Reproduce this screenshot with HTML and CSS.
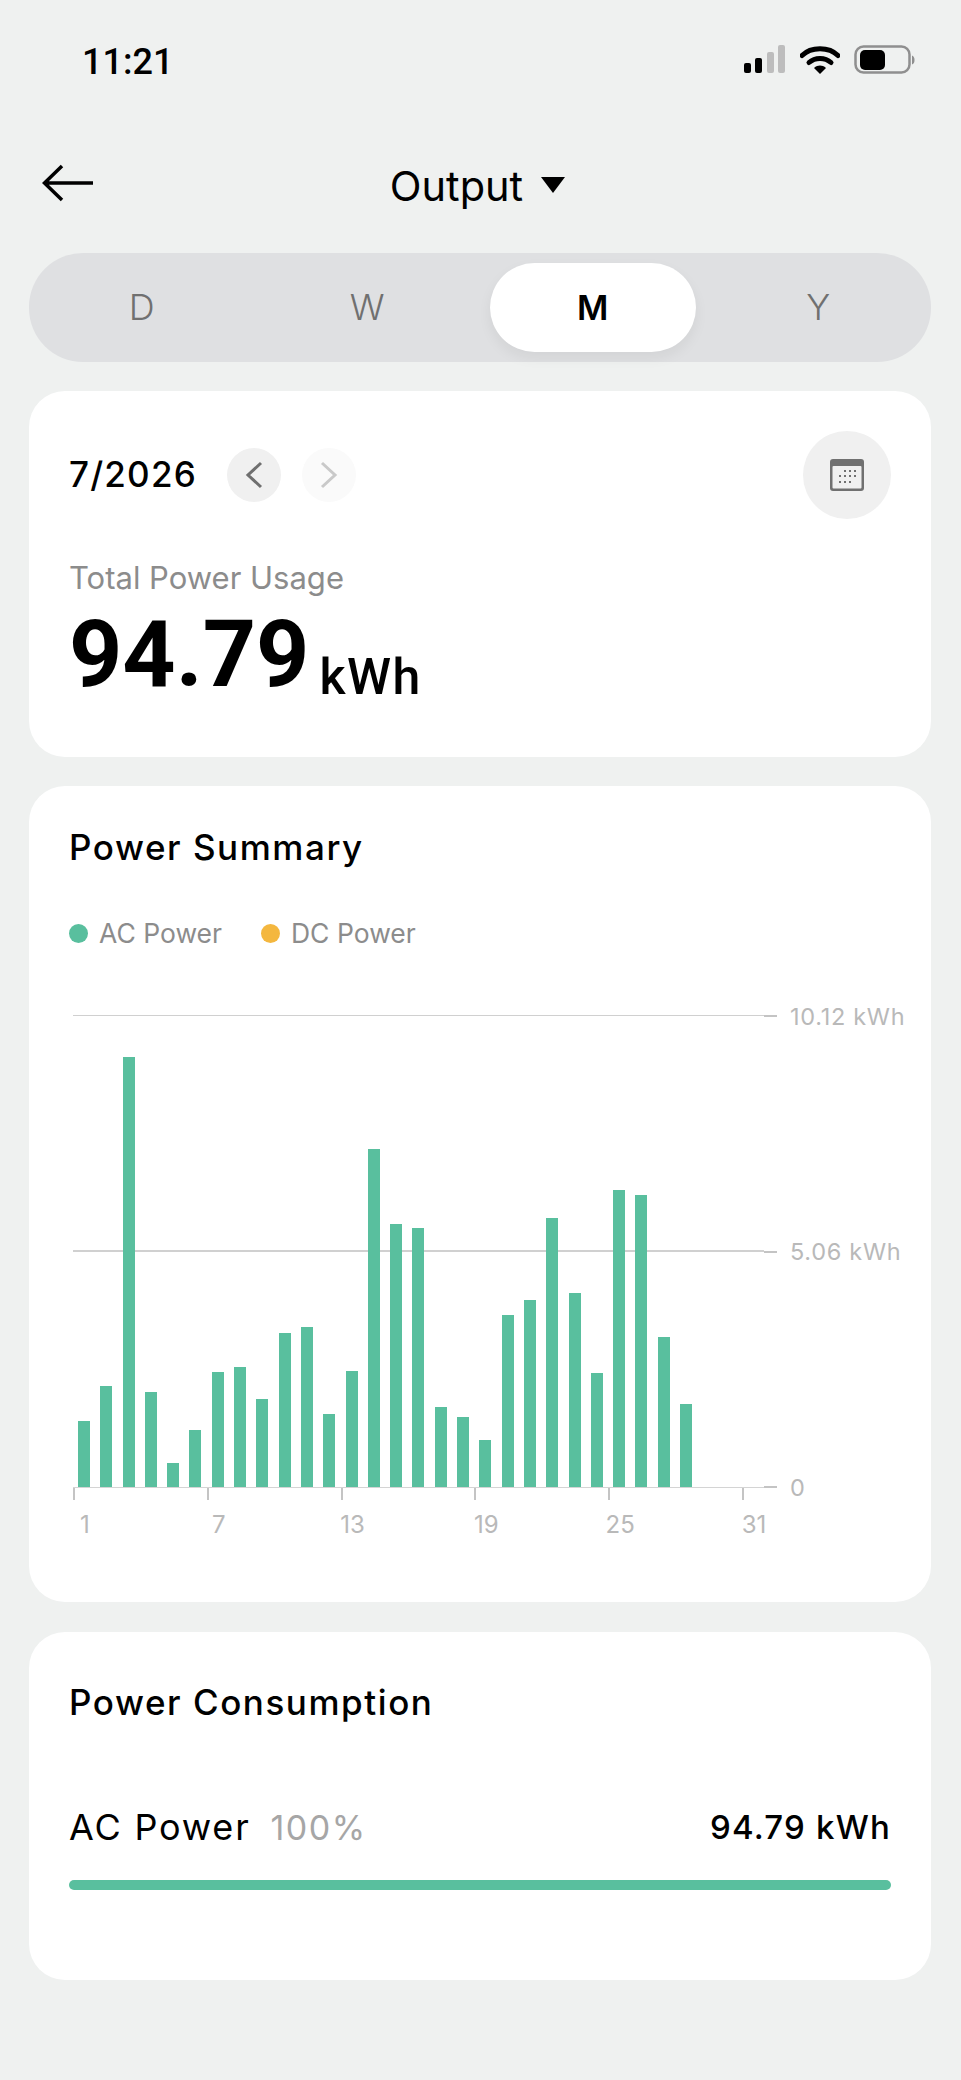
FILE: index.html
```html
<!DOCTYPE html>
<html lang="en">
<head>
    <meta charset="utf-8" />
    <title>Output</title>
    <link rel="stylesheet" href="styles.css">
</head>
<body>

    <div class="statusbar">
        <span class="time">11:21</span>
        <div class="status-icons">
            <svg width="42" height="30" viewBox="0 0 42 30">
                <rect x="0" y="18" width="7" height="10" rx="2" fill="#000"/>
                <rect x="11" y="13" width="7" height="15" rx="2" fill="#000"/>
                <rect x="23" y="7" width="7" height="21" rx="2" fill="#bdbdbd"/>
                <rect x="34" y="0" width="7" height="28" rx="2" fill="#bdbdbd"/>
            </svg>
            <svg width="40" height="30" viewBox="0 0 40 30">
                <path d="M2 10.5C11 1.5 29 1.5 38 10.5" fill="none" stroke="#000" stroke-width="5" stroke-linecap="round"/>
                <path d="M9 17.5C15 12 25 12 31 17.5" fill="none" stroke="#000" stroke-width="5" stroke-linecap="round"/>
                <path d="M14 23L20 29L26 23C22 19.8 18 19.8 14 23Z" fill="#000"/>
            </svg>
            <svg width="61" height="30" viewBox="0 0 61 30">
                <rect x="1.5" y="1.5" width="54" height="26" rx="8" fill="none" stroke="#8f8f8f" stroke-width="2.5"/>
                <rect x="6" y="5" width="25" height="20" rx="5" fill="#000"/>
                <path d="M58 10.5C60 11.5 60.5 13 60.5 15C60.5 17 60 18.500 58 19.500Z" fill="#8f8f8f"/>
            </svg>
        </div>
    </div>

    <header class="topbar">
        <svg class="back" width="52" height="38" viewBox="0 0 52 38">
            <path d="M51 19H3M20 2L2.500 19L20 36" fill="none" stroke="#000" stroke-width="3.500"/>
        </svg>
        <div class="page-title">Output <span class="caret"></span></div>
    </header>

    <div class="segments">
        <div class="seg">D</div>
        <div class="seg">W</div>
        <div class="seg seg-active">M</div>
        <div class="seg">Y</div>
    </div>

    <section class="card card-total">
        <div class="date-row">
            <span class="date">7/2026</span>
            <button class="round-btn">
                <svg width="18" height="28" viewBox="0 0 18 28"><path d="M16 2L3 14L16 26" fill="none" stroke="#6f6f6f" stroke-width="3"/></svg>
            </button>
            <button class="round-btn round-btn-off">
                <svg width="18" height="28" viewBox="0 0 18 28"><path d="M2 2L15 14L2 26" fill="none" stroke="#c9c9c9" stroke-width="3"/></svg>
            </button>
            <button class="cal-btn">
                <svg width="34" height="32" viewBox="0 0 34 32">
                    <rect x="0" y="0" width="34" height="32" rx="3" fill="#707070"/>
                    <rect x="2.500" y="7" width="29" height="22.500" rx="1" fill="#f0f0f0"/>
                    <g fill="#707070">
                        <rect x="14" y="11" width="2" height="2"/><rect x="19" y="11" width="2" height="2"/><rect x="24" y="11" width="2" height="2"/>
                        <rect x="9" y="16" width="2" height="2"/><rect x="14" y="16" width="2" height="2"/><rect x="19" y="16" width="2" height="2"/><rect x="24" y="16" width="2" height="2"/>
                        <rect x="9" y="22" width="2" height="2"/><rect x="14" y="22" width="2" height="2"/><rect x="19" y="22" width="2" height="2"/>
                    </g>
                </svg>
            </button>
        </div>
        <div class="total-label">Total Power Usage</div>
        <div class="total-value"><span class="big-num">94.79</span><span class="big-unit">kWh</span></div>
    </section>

    <section class="card card-summary">
        <h2 class="card-title">Power Summary</h2>
        <div class="legend">
            <span class="dot dot-ac"></span><span class="legend-txt">AC Power</span>
            <span class="dot dot-dc"></span><span class="legend-txt">DC Power</span>
        </div>

        <div class="chart">
            <div class="plot">
                <div class="gridline grid-top"></div>
                <div class="gridline grid-mid"></div>
                <div class="bars">
                    <div class="bar" style="height:66px"></div>
                    <div class="bar" style="height:101px"></div>
                    <div class="bar" style="height:430px"></div>
                    <div class="bar" style="height:95px"></div>
                    <div class="bar" style="height:24px"></div>
                    <div class="bar" style="height:57px"></div>
                    <div class="bar" style="height:115px"></div>
                    <div class="bar" style="height:120px"></div>
                    <div class="bar" style="height:88px"></div>
                    <div class="bar" style="height:154px"></div>
                    <div class="bar" style="height:160px"></div>
                    <div class="bar" style="height:73px"></div>
                    <div class="bar" style="height:116px"></div>
                    <div class="bar" style="height:338px"></div>
                    <div class="bar" style="height:263px"></div>
                    <div class="bar" style="height:259px"></div>
                    <div class="bar" style="height:80px"></div>
                    <div class="bar" style="height:70px"></div>
                    <div class="bar" style="height:47px"></div>
                    <div class="bar" style="height:172px"></div>
                    <div class="bar" style="height:187px"></div>
                    <div class="bar" style="height:269px"></div>
                    <div class="bar" style="height:194px"></div>
                    <div class="bar" style="height:114px"></div>
                    <div class="bar" style="height:297px"></div>
                    <div class="bar" style="height:292px"></div>
                    <div class="bar" style="height:150px"></div>
                    <div class="bar" style="height:83px"></div>
                </div>
            </div>
            <div class="yaxis">
                <div class="ylabel">10.12 kWh</div>
                <div class="ylabel">5.06 kWh</div>
                <div class="ylabel">0</div>
            </div>
        </div>
        <div class="xaxis">
            <div class="xcell"><span>1</span></div>
            <div class="xcell"><span>7</span></div>
            <div class="xcell"><span>13</span></div>
            <div class="xcell"><span>19</span></div>
            <div class="xcell"><span>25</span></div>
            <div class="xcell"><span>31</span></div>
        </div>
    </section>

    <section class="card card-consumption">
        <h2 class="card-title">Power Consumption</h2>
        <div class="usage-row">
            <span class="usage-name">AC Power</span>
            <span class="usage-pct">100%</span>
            <span class="usage-val">94.79 kWh</span>
        </div>
        <div class="usage-bar"></div>
    </section>

</body>
</html>
```

FILE: styles.css
```css
body{
    margin: 0;
    height: 2080px;
    overflow: hidden;
    background: #eff1f0;
    color: #000;
    font-family: "Inter", "Liberation Sans", sans-serif;
}

/* status bar */
.statusbar{
    display: flex;
    justify-content: space-between;
    align-items: center;
    height: 30px;
    padding: 45px 46px 0 82px;
}
.time{
    padding-top: 3px;
    font-family: "Roboto", sans-serif;
    font-weight: 500;
    font-size: 36px;
    line-height: 30px;
}
.status-icons{
    display: flex;
    align-items: center;
    gap: 14px;
}

.topbar{
    position: relative;
    display: flex;
    justify-content: center;
    align-items: center;
    height: 60px;
    margin-top: 79px;
}
.back{
    position: absolute;
    left: 42px;
    top: 10px;
}
.page-title{
    display: flex;
    align-items: center;
    padding: 3px 6px 0 0;
    font-size: 41.500px;
    line-height: 60px;
}
.caret{
    width: 0;
    height: 0;
    margin-left: 18px;
    margin-top: -2px;
    border-left: 12.5px solid transparent;
    border-right: 12.5px solid transparent;
    border-top: 16px solid #000;
}

/* D W M Y */
.segments{
    display: flex;
    height: 89px;
    margin: 39px 30px 0 29px;
    padding: 10px 0;
    background: #dfe0e2;
    border-radius: 54px;
}
.seg{
    flex: 1;
    margin: 0 10px;
    border-radius: 45px;
    text-align: center;
    font-size: 36px;
    font-weight: 300;
    line-height: 89px;
    color: #707070;
}
.seg-active{
    background: #fff;
    color: #000;
    font-size: 34px;
    font-weight: 600;
    box-shadow: 0 6px 14px rgba(0,0,0,.06);
}

.card{
    margin: 30px 30px 0 29px;
    padding: 0 40px;
    background: #fff;
    border-radius: 36px;
}

.card-total{
    height: 366px;
    margin-top: 29px;
}
.date-row{
    display: flex;
    align-items: center;
    gap: 21px;
    height: 88px;
    padding-top: 40px;
}
.date{
    width: 137px;
    margin-top: -2px;
    font-size: 35px;
    font-weight: 500;
    letter-spacing: 1.200px;
}
.round-btn, .cal-btn{
    display: flex;
    justify-content: center;
    align-items: center;
    padding: 0;
    border: 0;
    border-radius: 50%;
    background: #f0f0f0;
}
.round-btn{
    width: 54px;
    height: 54px;
}
.round-btn-off{
    background: #fafafa;
}
.cal-btn{
    width: 88px;
    height: 88px;
    margin-left: auto;
}
.total-label{
    margin-top: 40px;
    font-size: 31px;
    line-height: 38px;
    color: #8c8c8c;
}
.total-value{
    display: flex;
    align-items: flex-end;
    margin-top: 8px;
}
.big-num{
    font-family: "Roboto", sans-serif;
    font-weight: 700;
    font-size: 93px;
    line-height: 100px;
}
.big-unit{
    margin-left: 10px;
    font-family: "Roboto", sans-serif;
    font-weight: 500;
    font-size: 50px;
    line-height: 55px;
    letter-spacing: 1.500px;
}

.card-summary{
    height: 816px;
    margin-top: 29px;
    padding-right: 0;
}
.card-title{
    margin: 0;
    padding-top: 40px;
    font-size: 35px;
    font-weight: 500;
    line-height: 42px;
    letter-spacing: 1.550px;
}
.legend{
    display: flex;
    align-items: center;
    margin-top: 50px;
    height: 30px;
}
.dot{
    width: 19px;
    height: 19px;
    border-radius: 50%;
    margin-right: 11px;
}
.dot-ac{
    background: #59bf9e;
}
.dot-dc{
    background: #f4b73f;
}
.legend-txt{
    width: 162px;
    font-size: 26.500px;
    color: #8c8c8c;
}

.chart{
    display: flex;
    margin: 67px 0 0 4px;
}
.plot{
    position: relative;
    width: 691px;
    height: 472px;
    border-bottom: 1px solid #d4d4d4;
}
.gridline{
    position: absolute;
    left: 0;
    right: 0;
    height: 1px;
    background: #d0d0d0;
}
.grid-top{
    top: 0;
}
.grid-mid{
    top: 235px;
    height: 2px;
}
.bars{
    position: absolute;
    left: 5px;
    bottom: 0;
    display: flex;
    align-items: flex-end;
    gap: 10.300px;
}
.bar{
    width: 12px;
    background: #59bf9e;
}
.yaxis{
    display: flex;
    flex-direction: column;
    justify-content: space-between;
    height: 473px;
}
.ylabel{
    display: flex;
    align-items: center;
    height: 2px;
    font-size: 23.500px;
    letter-spacing: .7px;
    color: #b9b9b9;
}
.ylabel::before{
    content: "";
    width: 13px;
    height: 2px;
    margin-right: 13px;
    background: #c4c4c4;
}

.xaxis{
    display: flex;
    margin-left: 4px;
}
.xcell{
    width: 133.800px;
    height: 50px;
    font-size: 24px;
    color: #b9b9b9;
}
.xcell::before{
    content: "";
    display: block;
    width: 2px;
    height: 12px;
    background: #c4c4c4;
}
.xcell span{
    display: flex;
    justify-content: center;
    width: 24px;
    margin-top: 12px;
    line-height: 26px;
}

.card-consumption{
    height: 348px;
}
.card-consumption .card-title{
    padding-top: 49px;
}
.usage-row{
    display: flex;
    align-items: center;
    height: 40px;
    margin-top: 84px;
}
.usage-name{
    font-size: 36px;
    letter-spacing: 1.800px;
}
.usage-pct{
    margin-left: 20px;
    font-size: 34px;
    letter-spacing: 1.500px;
    color: #a6a6a6;
}
.usage-val{
    margin-left: auto;
    font-size: 33px;
    font-weight: 500;
    letter-spacing: 1.200px;
}
.usage-bar{
    height: 10px;
    margin-top: 33px;
    border-radius: 5px;
    background: #59bf9e;
}
```
